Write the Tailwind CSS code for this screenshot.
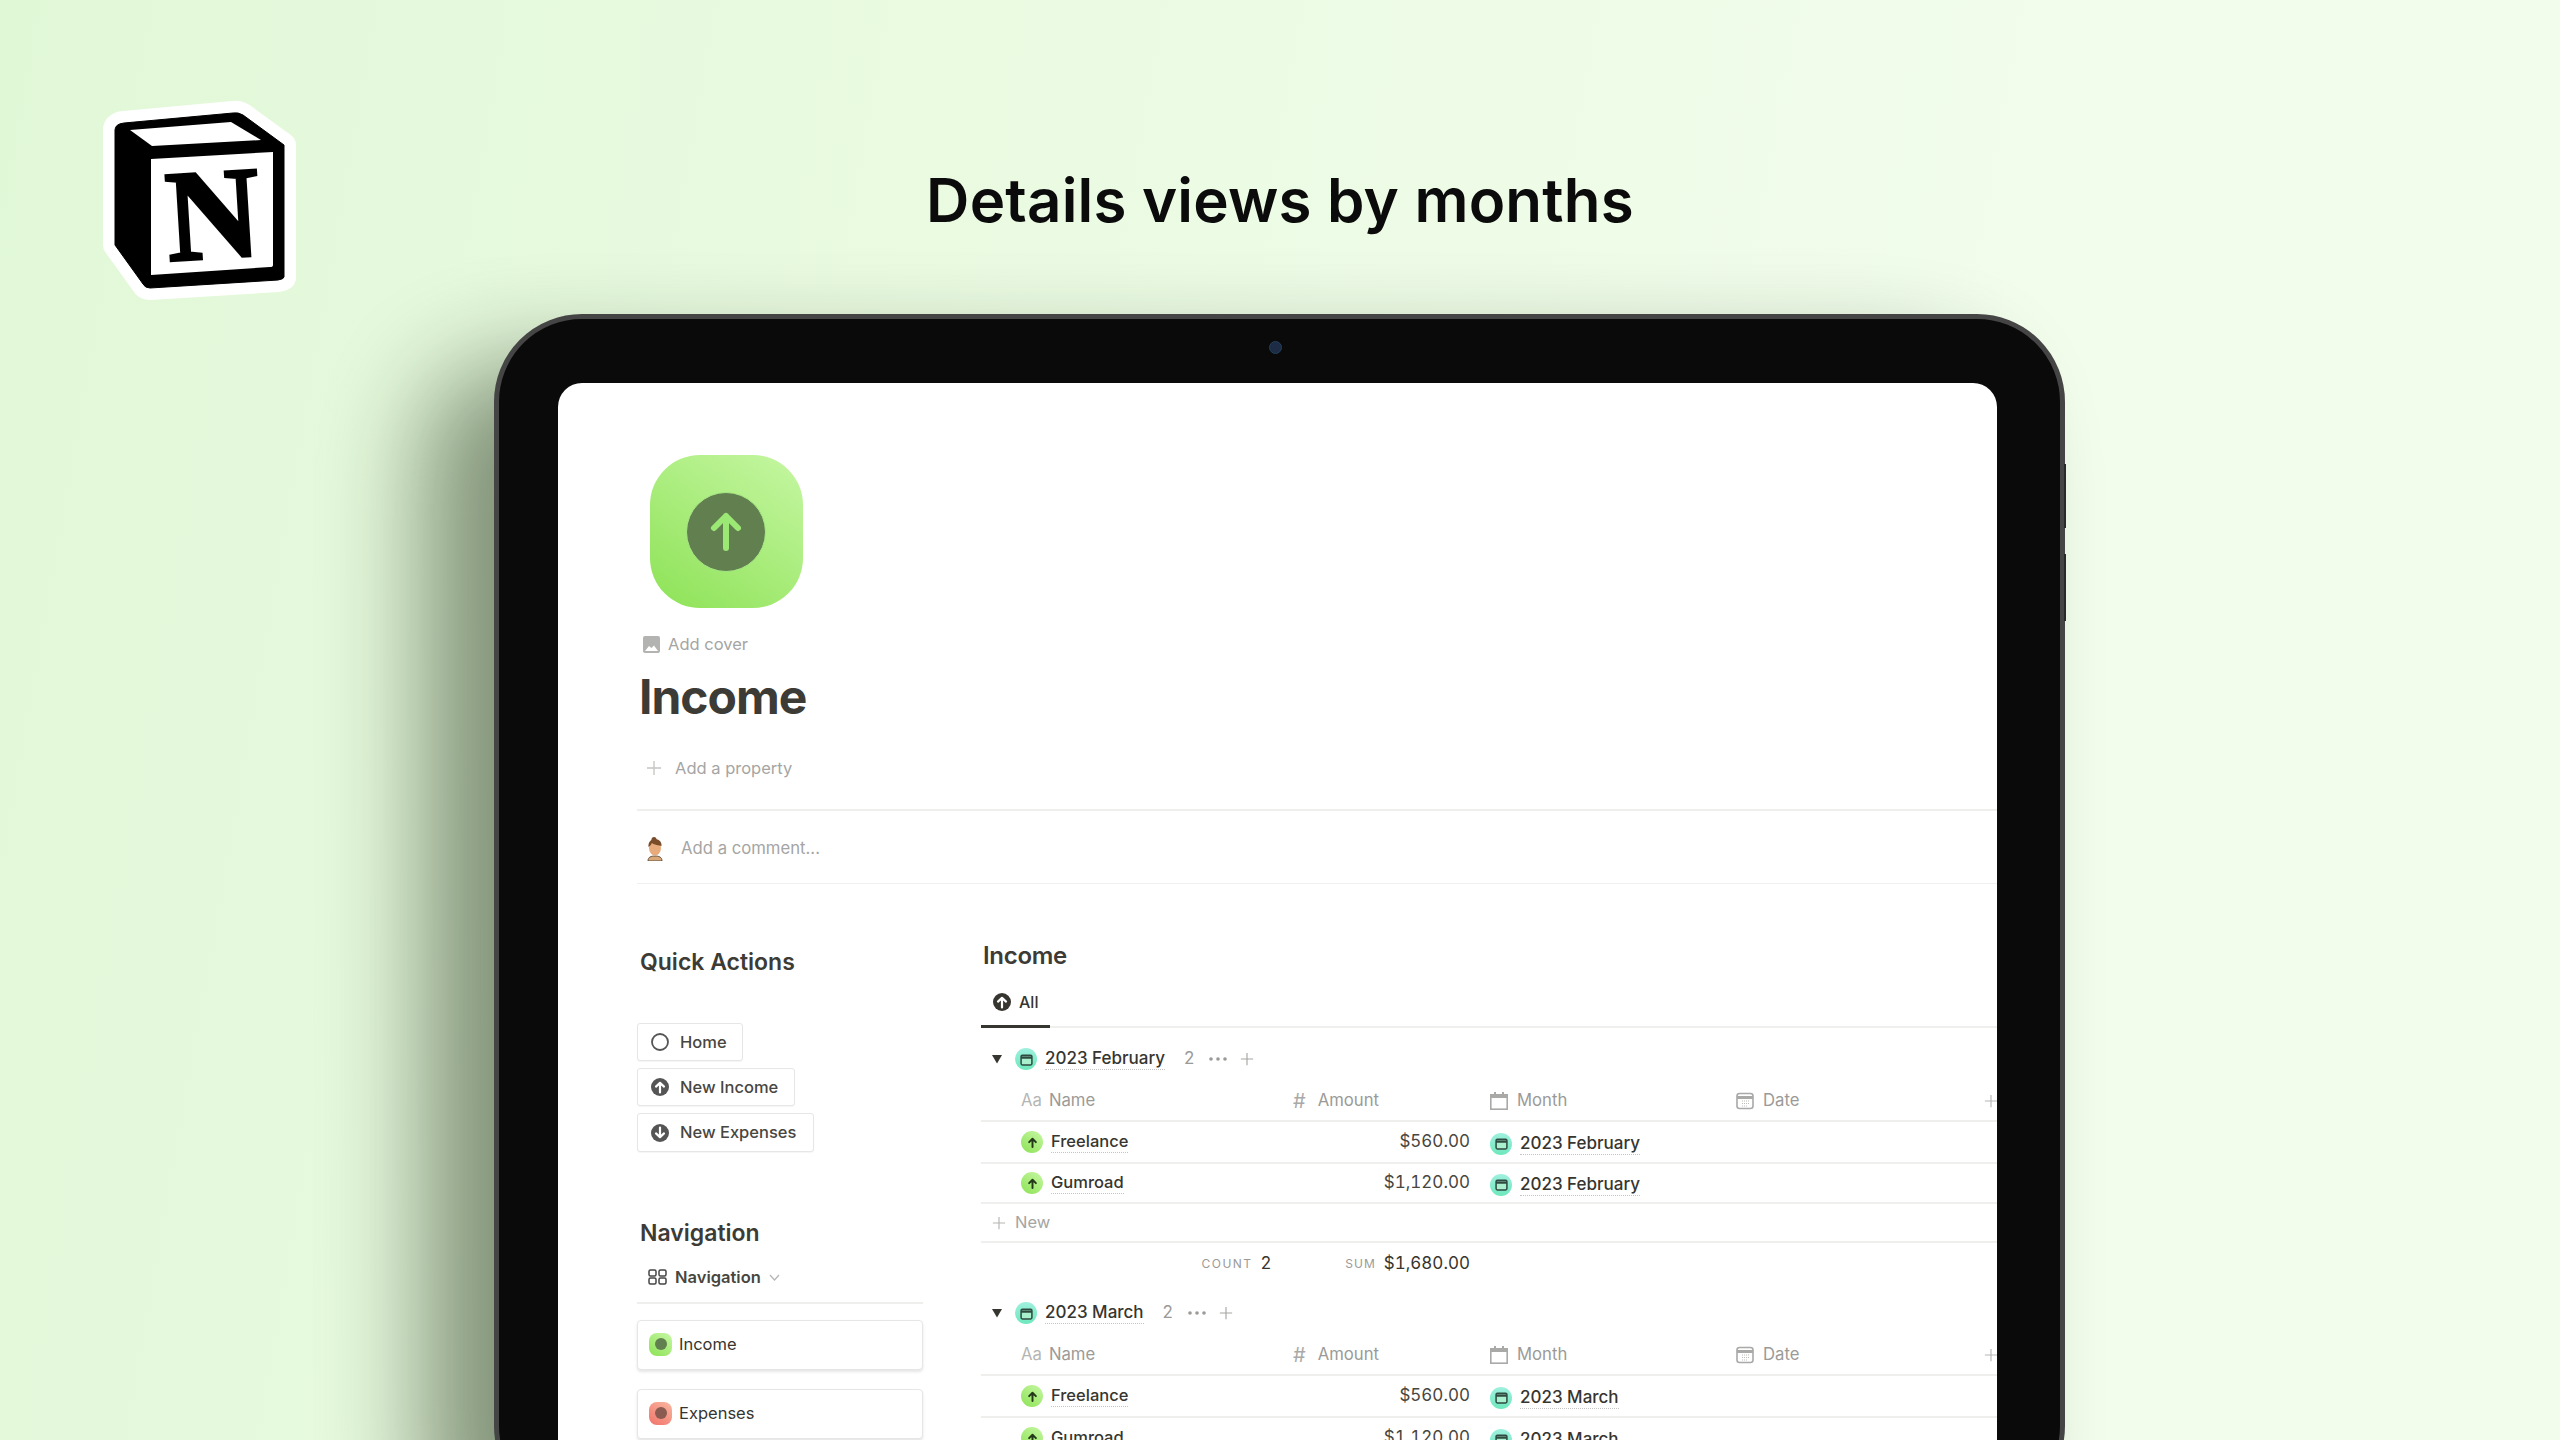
<!DOCTYPE html>
<html lang="en">
<head>
    <meta charset="UTF-8">
    <title>Details views by months</title>
    <script src="https://cdn.jsdelivr.net/npm/@tailwindcss/browser@4"></script>
</head>
<body class="font-['Inter',sans-serif] text-[#37352f]">

    <!--Icons used more than once-->
    <svg class="hidden">
        <symbol id="plus" viewBox="0 0 16 16"><path d="M8 1v14M1 8h14" fill="none" stroke="currentColor" stroke-width="1.3"/></symbol>
        <symbol id="arrow-up" viewBox="0 0 20 20"><path d="M10 16V5M5.5 9.5 10 5l4.5 4.5" fill="none" stroke="currentColor" stroke-width="2.6" stroke-linecap="round" stroke-linejoin="round"/></symbol>
        <symbol id="circle-up" viewBox="0 0 18 18"><circle cx="9" cy="9" r="9" fill="currentColor"/><path d="M9 14.5V5M5 8.6 9 4.8l4 3.8" fill="none" stroke="#fff" stroke-width="2.2" stroke-linecap="round" stroke-linejoin="round"/></symbol>
        <symbol id="circle-down" viewBox="0 0 18 18"><circle cx="9" cy="9" r="9" fill="currentColor"/><path d="M9 3.5V13M5 9.4l4 3.8 4-3.8" fill="none" stroke="#fff" stroke-width="2.2" stroke-linecap="round" stroke-linejoin="round"/></symbol>
        <symbol id="cal" viewBox="0 0 12 12"><rect x="1" y="2" width="10" height="9" rx="1.2" fill="#a8efce" stroke="#2f4a40" stroke-width="1.4"/><path d="M1 4.2h10" stroke="#2f4a40" stroke-width="2.2"/></symbol>
        <symbol id="month" viewBox="0 0 18 18"><path d="M4 0h2v2h6V0h2v2h4v16H0V2h4z" fill="#a9a9a7"/><rect x="1.6" y="6" width="14.8" height="10.4" fill="#fff"/></symbol>
        <symbol id="date" viewBox="0 0 18 18"><rect x="1" y="1.5" width="16" height="15" rx="2.5" fill="#fff" stroke="#a9a9a7" stroke-width="1.6"/><path d="M1 5.5h16" stroke="#a9a9a7" stroke-width="3"/><path d="M6 9h7M6 11.5h7M6 14h5" stroke="#bdbdbb" stroke-width="1.2" stroke-dasharray="1 1"/></symbol>
    </svg>

    <div class="relative h-[1440px] overflow-hidden bg-[linear-gradient(100deg,#e1f8d7_0%,#ebfbe3_40%,#f2fdec_75%,#f2fdec_100%)]">

        <!--Notion logo-->
        <svg class="absolute left-[90px] top-[90px] w-[220px] h-[220px]" viewBox="90 90 220 220">
            <path d="M124 123 233 113Q238 112 243 115L284 145V277Q284 279 278 280L150 288Q145 288 143 284L115 245V130Q115 124 124 123Z" fill="#000" stroke="#fff" stroke-width="24" stroke-linejoin="round"/>
            <path d="M124 123 233 113Q238 112 243 115L284 145V277Q284 279 278 280L150 288Q145 288 143 284L115 245V130Q115 124 124 123Z" fill="#000" stroke="#000" stroke-width="1"/>
            <path d="M130 130 231 122 261 140 152 146Z" fill="#fff"/>
            <path d="M151 159 273 152V265Q273 267 270 267L151 275Z" fill="#fff"/>
            <text x="213" y="258" text-anchor="middle" transform="rotate(-3.5 214 215)" class="font-['Liberation_Serif',serif] font-bold text-[130px]" fill="#000" stroke="#000" stroke-width="3">N</text>
        </svg>

        <h1 class="pt-[165px] h-[314px] text-center text-[60px] leading-[70px] font-semibold text-[#0b0b0b] tracking-[0.2px]">Details views by months</h1>

        <!--Tablet-->
        <div class="relative ml-[494px] w-[1571px] h-[1200px] rounded-[88px] bg-[#0a0a0a] border-[5px] border-[#454545] pl-[59px] pr-[63px] pt-[64px] shadow-[-70px_50px_100px_rgba(20,35,10,0.48)]">
            <div class="absolute top-[22px] left-[770px] w-[13px] h-[13px] rounded-full bg-[#1d2b45] border border-[#24405a]"></div>
            <div class="absolute -right-[6px] top-[145px] w-[2px] h-[64px] bg-[#2a2a2a]"></div>
            <div class="absolute -right-[6px] top-[235px] w-[2px] h-[67px] bg-[#2a2a2a]"></div>

            <!--Screen-->
            <div class="h-[1100px] rounded-t-[24px] bg-white pt-[72px] overflow-hidden">
                <div class="pl-[79px]">
                    <!--Page icon-->
                    <div class="ml-[13px] w-[153px] h-[153px] rounded-[50px] bg-[linear-gradient(35deg,#8de256,#c6f7a3)] flex items-center justify-center">
                        <div class="w-[80px] h-[80px] -ml-[2px] rounded-full bg-[#627f4f] border border-[#a6e884] flex items-center justify-center">
                            <svg class="w-[40px] h-[44px]" viewBox="0 0 40 44" fill="none" stroke="#9be874" stroke-width="6" stroke-linecap="round" stroke-linejoin="round"><path d="M20 38V6M8 18 20 6l12 12"/></svg>
                        </div>
                    </div>

                    <div class="mt-[24px] h-[24px] ml-[6px] flex items-center gap-[8px] text-[16.5px] text-[#a5a5a3]">
                        <svg class="w-[17px] h-[17px]" viewBox="0 0 17 17"><rect width="17" height="17" rx="2" fill="#b3b3b1"/><path d="M2 15l4-5 2.5 2 2.5-2.5 4 5.500z" fill="#fff"/></svg>
                        <span>Add cover</span>
                    </div>

                    <div class="mt-[11px] ml-[2px] h-[60px] text-[48px] leading-[60px] font-bold tracking-[-1px] text-[#3c3b36]">Income</div>

                    <div class="mt-[29px] h-[24px] ml-[9px] flex items-center gap-[13px] text-[16.5px] text-[#a5a5a3]">
                        <svg class="w-[16px] h-[16px] text-[#c4c4c2]"><use href="#plus"/></svg>
                        <span>Add a property</span>
                    </div>

                    <div class="mt-[29px] border-t-2 border-[#efefee] h-[74px] pt-[3px] flex items-center">
                        <svg class="ml-[8px] w-[20px] h-[24px]" viewBox="0 0 20 24">
                            <path d="M3 24c0-4 3-5 7-5s7 1 7 5z" fill="#d9a878" stroke="#4a3a2a" stroke-width="0.8"/>
                            <ellipse cx="10" cy="11" rx="6" ry="7.500" fill="#e8ab7c"/>
                            <path d="M3.500 10C3 5 6 2 10 2s7 3 6.500 7C14 8 9 8 7 6c-1 2-2 3-3.500 4z" fill="#7a4d2a"/>
                            <circle cx="9" cy="2.500" r="2.500" fill="#7a4d2a"/>
                        </svg>
                        <span class="ml-[16px] text-[16.7px] text-[#a5a5a3]">Add a comment...</span>
                    </div>
                    <div class="border-t border-[#efefee]"></div>

                    <div class="flex gap-[58px]">
                        <!--Left column-->
                        <div class="w-[286px] shrink-0">
                            <h2 class="mt-[63px] ml-[3px] h-[30px] text-[23px] leading-[30px] font-semibold text-[#3c3b36]">Quick Actions</h2>

                            <div class="mt-[46px] flex flex-col items-start gap-[7px] text-[16.5px] font-medium text-[#484640]">
                                <div class="h-[38px] w-[106px] flex items-center gap-[11px] pl-[13px] bg-white border border-[#e6e6e5] rounded-[3px] shadow-[0_1px_1px_rgba(0,0,0,0.04)]">
                                    <svg class="w-[18px] h-[18px]" viewBox="0 0 18 18"><circle cx="9" cy="9" r="8" fill="none" stroke="#555" stroke-width="1.800"/></svg>
                                    <span>Home</span>
                                </div>
                                <div class="h-[38px] w-[158px] flex items-center gap-[11px] pl-[13px] bg-white border border-[#e6e6e5] rounded-[3px] shadow-[0_1px_1px_rgba(0,0,0,0.04)]">
                                    <svg class="w-[18px] h-[18px] text-[#555]"><use href="#circle-up"/></svg>
                                    <span>New Income</span>
                                </div>
                                <div class="h-[39px] w-[177px] flex items-center gap-[11px] pl-[13px] bg-white border border-[#e6e6e5] rounded-[3px] shadow-[0_1px_1px_rgba(0,0,0,0.04)]">
                                    <svg class="w-[18px] h-[18px] text-[#555]"><use href="#circle-down"/></svg>
                                    <span>New Expenses</span>
                                </div>
                            </div>

                            <h2 class="mt-[66px] ml-[3px] h-[30px] text-[23px] leading-[30px] font-semibold text-[#3c3b36]">Navigation</h2>

                            <div class="mt-[14px] h-[30px] flex items-center pl-[11px] text-[16.5px] font-semibold text-[#484640]">
                                <svg class="w-[19px] h-[16px]" viewBox="0 0 19 16" fill="none" stroke="#444" stroke-width="1.500"><rect x="1" y="1" width="7" height="6" rx="1.500"/><rect x="11" y="1" width="7" height="6" rx="1.500"/><rect x="1" y="9" width="7" height="6" rx="1.500"/><rect x="11" y="9" width="7" height="6" rx="1.500"/></svg>
                                <span class="ml-[8px]">Navigation</span>
                                <svg class="ml-[8px] w-[11px] h-[7px]" viewBox="0 0 11 7" fill="none" stroke="#b5b5b3" stroke-width="1.200"><path d="M1 1l4.500 5L10 1"/></svg>
                            </div>
                            <div class="mt-[10px] border-t-2 border-[#efefee]"></div>

                            <div class="mt-[16px] h-[50px] pb-[2px] flex items-center gap-[7px] pl-[11px] bg-white border border-[#e6e6e5] rounded-[4px] shadow-[0_2px_3px_rgba(0,0,0,0.1)] text-[16.5px] text-[#37352f]">
                                <span class="w-[23px] h-[23px] rounded-[8px] bg-[linear-gradient(35deg,#8de256,#c6f7a3)] flex items-center justify-center">
                                    <span class="w-[12px] h-[12px] rounded-full bg-[#627f4f]"></span>
                                </span>
                                <span>Income</span>
                            </div>
                            <div class="mt-[19px] h-[50px] pb-[2px] flex items-center gap-[7px] pl-[11px] bg-white border border-[#e6e6e5] rounded-[4px] shadow-[0_2px_3px_rgba(0,0,0,0.1)] text-[16.5px] text-[#37352f]">
                                <span class="w-[23px] h-[23px] rounded-[8px] bg-[linear-gradient(35deg,#f0736a,#f9b7a0)] flex items-center justify-center">
                                    <span class="w-[12px] h-[12px] rounded-full bg-[#8b5a50]"></span>
                                </span>
                                <span>Expenses</span>
                            </div>
                        </div>

                        <!--Database-->
                        <div class="flex-1 min-w-0">
                            <h2 class="mt-[57px] ml-[2px] h-[30px] text-[24px] leading-[30px] font-semibold tracking-[-0.3px] text-[#3c3b36]">Income</h2>

                            <div class="mt-[20px] h-[37px] border-b-2 border-[#efefee]">
                                <div class="w-[69px] h-[37px] border-b-[3px] border-[#37352f] flex items-start pt-[2px] gap-[8px] pl-[12px] text-[16px] font-medium">
                                    <svg class="w-[18px] h-[18px] text-[#37352f]"><use href="#circle-up"/></svg>
                                    <span class="leading-[18px]">All</span>
                                </div>
                            </div>

                            <!--February-->
                            <div class="mt-[19px] h-[24px] flex items-center text-[17px]">
                                <svg class="ml-[11px] w-[10px] h-[10px]" viewBox="0 0 10 10"><path d="M0 1h10L5 9.500z" fill="#37352f"/></svg>
                                <span class="ml-[13px] w-[22px] h-[22px] rounded-full bg-[linear-gradient(180deg,#9ff0de,#6ee8bc)] flex items-center justify-center"><svg class="w-[13px] h-[13px]"><use href="#cal"/></svg></span>
                                <span class="ml-[8px] font-medium border-b border-dotted border-[#c4c4c2] leading-[21px]">2023 February</span>
                                <span class="ml-[19px] text-[#9b9a97]">2</span>
                                <svg class="ml-[15px] w-[18px] h-[4px]" viewBox="0 0 18 4" fill="#9b9a97"><circle cx="2" cy="2" r="1.800"/><circle cx="9" cy="2" r="1.800"/><circle cx="16" cy="2" r="1.800"/></svg>
                                <svg class="ml-[13px] w-[14px] h-[14px] text-[#a5a5a3]"><use href="#plus"/></svg>
                            </div>

                            <div class="mt-[18px] h-[33px] grid grid-cols-[302px_197px_246px_249px_auto] items-start text-[16.7px] text-[#9b9a97] border-b-2 border-[#efefee]">
                                <div class="pl-[40px] flex items-center gap-[7px] h-[24px]"><span class="text-[#b5b5b3]">Aa</span><span>Name</span></div>
                                <div class="pl-[10px] flex items-center gap-[12px] h-[24px]"><span class="text-[20px] text-[#a9a9a7]">#</span><span>Amount</span></div>
                                <div class="pl-[10px] flex items-center gap-[9px] h-[24px]"><svg class="w-[18px] h-[18px]"><use href="#month"/></svg><span>Month</span></div>
                                <div class="pl-[10px] flex items-center gap-[9px] h-[24px]"><svg class="w-[18px] h-[18px]"><use href="#date"/></svg><span>Date</span></div>
                                <div class="pl-[9px] flex items-center h-[24px]"><svg class="w-[14px] h-[14px] text-[#b5b5b3]"><use href="#plus"/></svg></div>
                            </div>

                            <div class="h-[42px] grid grid-cols-[302px_197px_246px_249px_auto] items-center text-[17px] border-b-2 border-[#efefee]">
                                <div class="pl-[40px] flex items-center gap-[8px] font-medium"><span class="w-[22px] h-[22px] rounded-full bg-[linear-gradient(35deg,#8de256,#c6f7a3)] flex items-center justify-center text-[#24381a]"><svg class="w-[15px] h-[15px]"><use href="#arrow-up"/></svg></span><span class="text-[16.5px] border-b border-dotted border-[#c4c4c2] leading-[21px]">Freelance</span></div>
                                <div class="pr-[10px] text-right text-[#484640] tabular-nums">$560.00</div>
                                <div class="pl-[10px] pt-[3px] flex items-center gap-[8px] font-medium"><span class="w-[22px] h-[22px] rounded-full bg-[linear-gradient(180deg,#9ff0de,#6ee8bc)] flex items-center justify-center"><svg class="w-[13px] h-[13px]"><use href="#cal"/></svg></span><span class="border-b border-dotted border-[#c4c4c2] leading-[21px]">2023 February</span></div>
                            </div>
                            <div class="h-[40px] grid grid-cols-[302px_197px_246px_249px_auto] items-center text-[17px] border-b-2 border-[#efefee]">
                                <div class="pl-[40px] flex items-center gap-[8px] font-medium"><span class="w-[22px] h-[22px] rounded-full bg-[linear-gradient(35deg,#8de256,#c6f7a3)] flex items-center justify-center text-[#24381a]"><svg class="w-[15px] h-[15px]"><use href="#arrow-up"/></svg></span><span class="text-[16.5px] border-b border-dotted border-[#c4c4c2] leading-[21px]">Gumroad</span></div>
                                <div class="pr-[10px] text-right text-[#484640] tabular-nums">$1,120.00</div>
                                <div class="pl-[10px] pt-[3px] flex items-center gap-[8px] font-medium"><span class="w-[22px] h-[22px] rounded-full bg-[linear-gradient(180deg,#9ff0de,#6ee8bc)] flex items-center justify-center"><svg class="w-[13px] h-[13px]"><use href="#cal"/></svg></span><span class="border-b border-dotted border-[#c4c4c2] leading-[21px]">2023 February</span></div>
                            </div>

                            <div class="h-[39px] flex items-center gap-[9px] pl-[11px] text-[16.5px] text-[#a5a5a3] border-b-2 border-[#efefee]">
                                <svg class="w-[14px] h-[14px] text-[#b5b5b3]"><use href="#plus"/></svg>
                                <span>New</span>
                            </div>

                            <div class="h-[42px] grid grid-cols-[302px_197px] items-center">
                                <div class="flex justify-end items-center gap-[8px] pr-[12px]"><span class="text-[12px] tracking-[1.5px] text-[#9b9a97]">COUNT</span><span class="text-[17px]">2</span></div>
                                <div class="flex justify-end items-center gap-[8px] pr-[10px]"><span class="text-[12px] tracking-[1px] text-[#9b9a97]">SUM</span><span class="text-[17px] tabular-nums">$1,680.00</span></div>
                            </div>

                            <!--March-->
                            <div class="mt-[16px] h-[24px] flex items-center text-[17px]">
                                <svg class="ml-[11px] w-[10px] h-[10px]" viewBox="0 0 10 10"><path d="M0 1h10L5 9.500z" fill="#37352f"/></svg>
                                <span class="ml-[13px] w-[22px] h-[22px] rounded-full bg-[linear-gradient(180deg,#9ff0de,#6ee8bc)] flex items-center justify-center"><svg class="w-[13px] h-[13px]"><use href="#cal"/></svg></span>
                                <span class="ml-[8px] font-medium border-b border-dotted border-[#c4c4c2] leading-[21px]">2023 March</span>
                                <span class="ml-[19px] text-[#9b9a97]">2</span>
                                <svg class="ml-[15px] w-[18px] h-[4px]" viewBox="0 0 18 4" fill="#9b9a97"><circle cx="2" cy="2" r="1.800"/><circle cx="9" cy="2" r="1.800"/><circle cx="16" cy="2" r="1.800"/></svg>
                                <svg class="ml-[13px] w-[14px] h-[14px] text-[#a5a5a3]"><use href="#plus"/></svg>
                            </div>

                            <div class="mt-[18px] h-[33px] grid grid-cols-[302px_197px_246px_249px_auto] items-start text-[16.7px] text-[#9b9a97] border-b-2 border-[#efefee]">
                                <div class="pl-[40px] flex items-center gap-[7px] h-[24px]"><span class="text-[#b5b5b3]">Aa</span><span>Name</span></div>
                                <div class="pl-[10px] flex items-center gap-[12px] h-[24px]"><span class="text-[20px] text-[#a9a9a7]">#</span><span>Amount</span></div>
                                <div class="pl-[10px] flex items-center gap-[9px] h-[24px]"><svg class="w-[18px] h-[18px]"><use href="#month"/></svg><span>Month</span></div>
                                <div class="pl-[10px] flex items-center gap-[9px] h-[24px]"><svg class="w-[18px] h-[18px]"><use href="#date"/></svg><span>Date</span></div>
                                <div class="pl-[9px] flex items-center h-[24px]"><svg class="w-[14px] h-[14px] text-[#b5b5b3]"><use href="#plus"/></svg></div>
                            </div>

                            <div class="h-[42px] grid grid-cols-[302px_197px_246px_249px_auto] items-center text-[17px] border-b-2 border-[#efefee]">
                                <div class="pl-[40px] flex items-center gap-[8px] font-medium"><span class="w-[22px] h-[22px] rounded-full bg-[linear-gradient(35deg,#8de256,#c6f7a3)] flex items-center justify-center text-[#24381a]"><svg class="w-[15px] h-[15px]"><use href="#arrow-up"/></svg></span><span class="text-[16.5px] border-b border-dotted border-[#c4c4c2] leading-[21px]">Freelance</span></div>
                                <div class="pr-[10px] text-right text-[#484640] tabular-nums">$560.00</div>
                                <div class="pl-[10px] pt-[3px] flex items-center gap-[8px] font-medium"><span class="w-[22px] h-[22px] rounded-full bg-[linear-gradient(180deg,#9ff0de,#6ee8bc)] flex items-center justify-center"><svg class="w-[13px] h-[13px]"><use href="#cal"/></svg></span><span class="border-b border-dotted border-[#c4c4c2] leading-[21px]">2023 March</span></div>
                            </div>
                            <div class="h-[40px] grid grid-cols-[302px_197px_246px_249px_auto] items-center text-[17px]">
                                <div class="pl-[40px] flex items-center gap-[8px] font-medium"><span class="w-[22px] h-[22px] rounded-full bg-[linear-gradient(35deg,#8de256,#c6f7a3)] flex items-center justify-center text-[#24381a]"><svg class="w-[15px] h-[15px]"><use href="#arrow-up"/></svg></span><span class="text-[16.5px] border-b border-dotted border-[#c4c4c2] leading-[21px]">Gumroad</span></div>
                                <div class="pr-[10px] text-right text-[#484640] tabular-nums">$1,120.00</div>
                                <div class="pl-[10px] pt-[3px] flex items-center gap-[8px] font-medium"><span class="w-[22px] h-[22px] rounded-full bg-[linear-gradient(180deg,#9ff0de,#6ee8bc)] flex items-center justify-center"><svg class="w-[13px] h-[13px]"><use href="#cal"/></svg></span><span class="border-b border-dotted border-[#c4c4c2] leading-[21px]">2023 March</span></div>
                            </div>
                        </div>
                    </div>
                </div>
            </div>
        </div>
    </div>
</body>
</html>
